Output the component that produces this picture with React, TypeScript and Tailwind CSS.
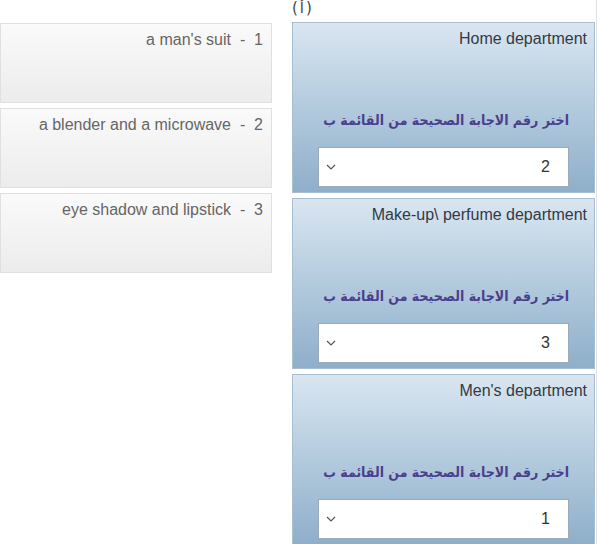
import React from "react";

const items = [
  { n: 1, text: "a man's suit" },
  { n: 2, text: "a blender and a microwave" },
  { n: 3, text: "eye shadow and lipstick" },
];

const panels = [
  { title: "Home department", value: "2" },
  { title: "Make-up\\ perfume department", value: "3" },
  { title: "Men's department", value: "1" },
];

function Chevron() {
  return (
    <svg width="10" height="6" viewBox="0 0 10 6" fill="none" className="block">
      <path d="M1 1l4 4 4-4" stroke="#555" strokeWidth="1.2" />
    </svg>
  );
}

function Panel({ title, value }: { title: string; value: string }) {
  return (
    <div className="flex h-[171px] flex-col overflow-hidden border border-[#a9bfd0] bg-gradient-to-b from-[#d9e6f1] to-[#8eafca] px-[25px] pb-[6px]">
      <div className="-mr-[18px] mt-[6px] whitespace-nowrap text-right text-[16px] leading-[20px] text-[#333a44]">{title}</div>
      <div
        dir="rtl"
        className="mt-[60px] whitespace-nowrap text-right text-[14px] font-bold leading-[22px] text-[#4a3f8c] [font-family:'DejaVu_Sans_Condensed','DejaVu_Sans',sans-serif]"
      >
        اختر رقم الاجابة الصحيحة من القائمة ب
      </div>
      <div className="mt-[16px] flex h-[40px] shrink-0 items-center justify-between border border-[#9aaab6] bg-white pl-[7px] pr-[18px]">
        <Chevron />
        <span className="text-[16px] text-[#333]">{value}</span>
      </div>
    </div>
  );
}

export default function App() {
  return (
    <div className="h-[544px] w-[597px] overflow-hidden border-r border-[#e2e2e2] bg-white [font-family:'Liberation_Sans',Arial,sans-serif]">
      <div className="h-[22px] pl-[292px] text-[15px] leading-[16px] text-[#444] [font-family:'DejaVu_Sans',sans-serif]">
        (<span className="px-[2px]">أ</span>)
      </div>
      <div className="flex items-start">
        <div className="mt-px flex w-[272px] flex-col gap-[5px]">
          {items.map((it) => (
            <div
              key={it.n}
              className="h-[80px] border border-[#e0e0e0] bg-gradient-to-b from-[#fafafa] to-[#ececec] pr-[8px] pt-[6px] text-right text-[16px] leading-[19px] text-[#666]"
            >
              {it.text}&nbsp;&nbsp;-&nbsp;&nbsp;{it.n}
            </div>
          ))}
        </div>
        <div className="ml-[20px] flex w-[303px] flex-col gap-[5px]">
          {panels.map((p) => (
            <Panel key={p.title} title={p.title} value={p.value} />
          ))}
        </div>
      </div>
    </div>
  );
}
